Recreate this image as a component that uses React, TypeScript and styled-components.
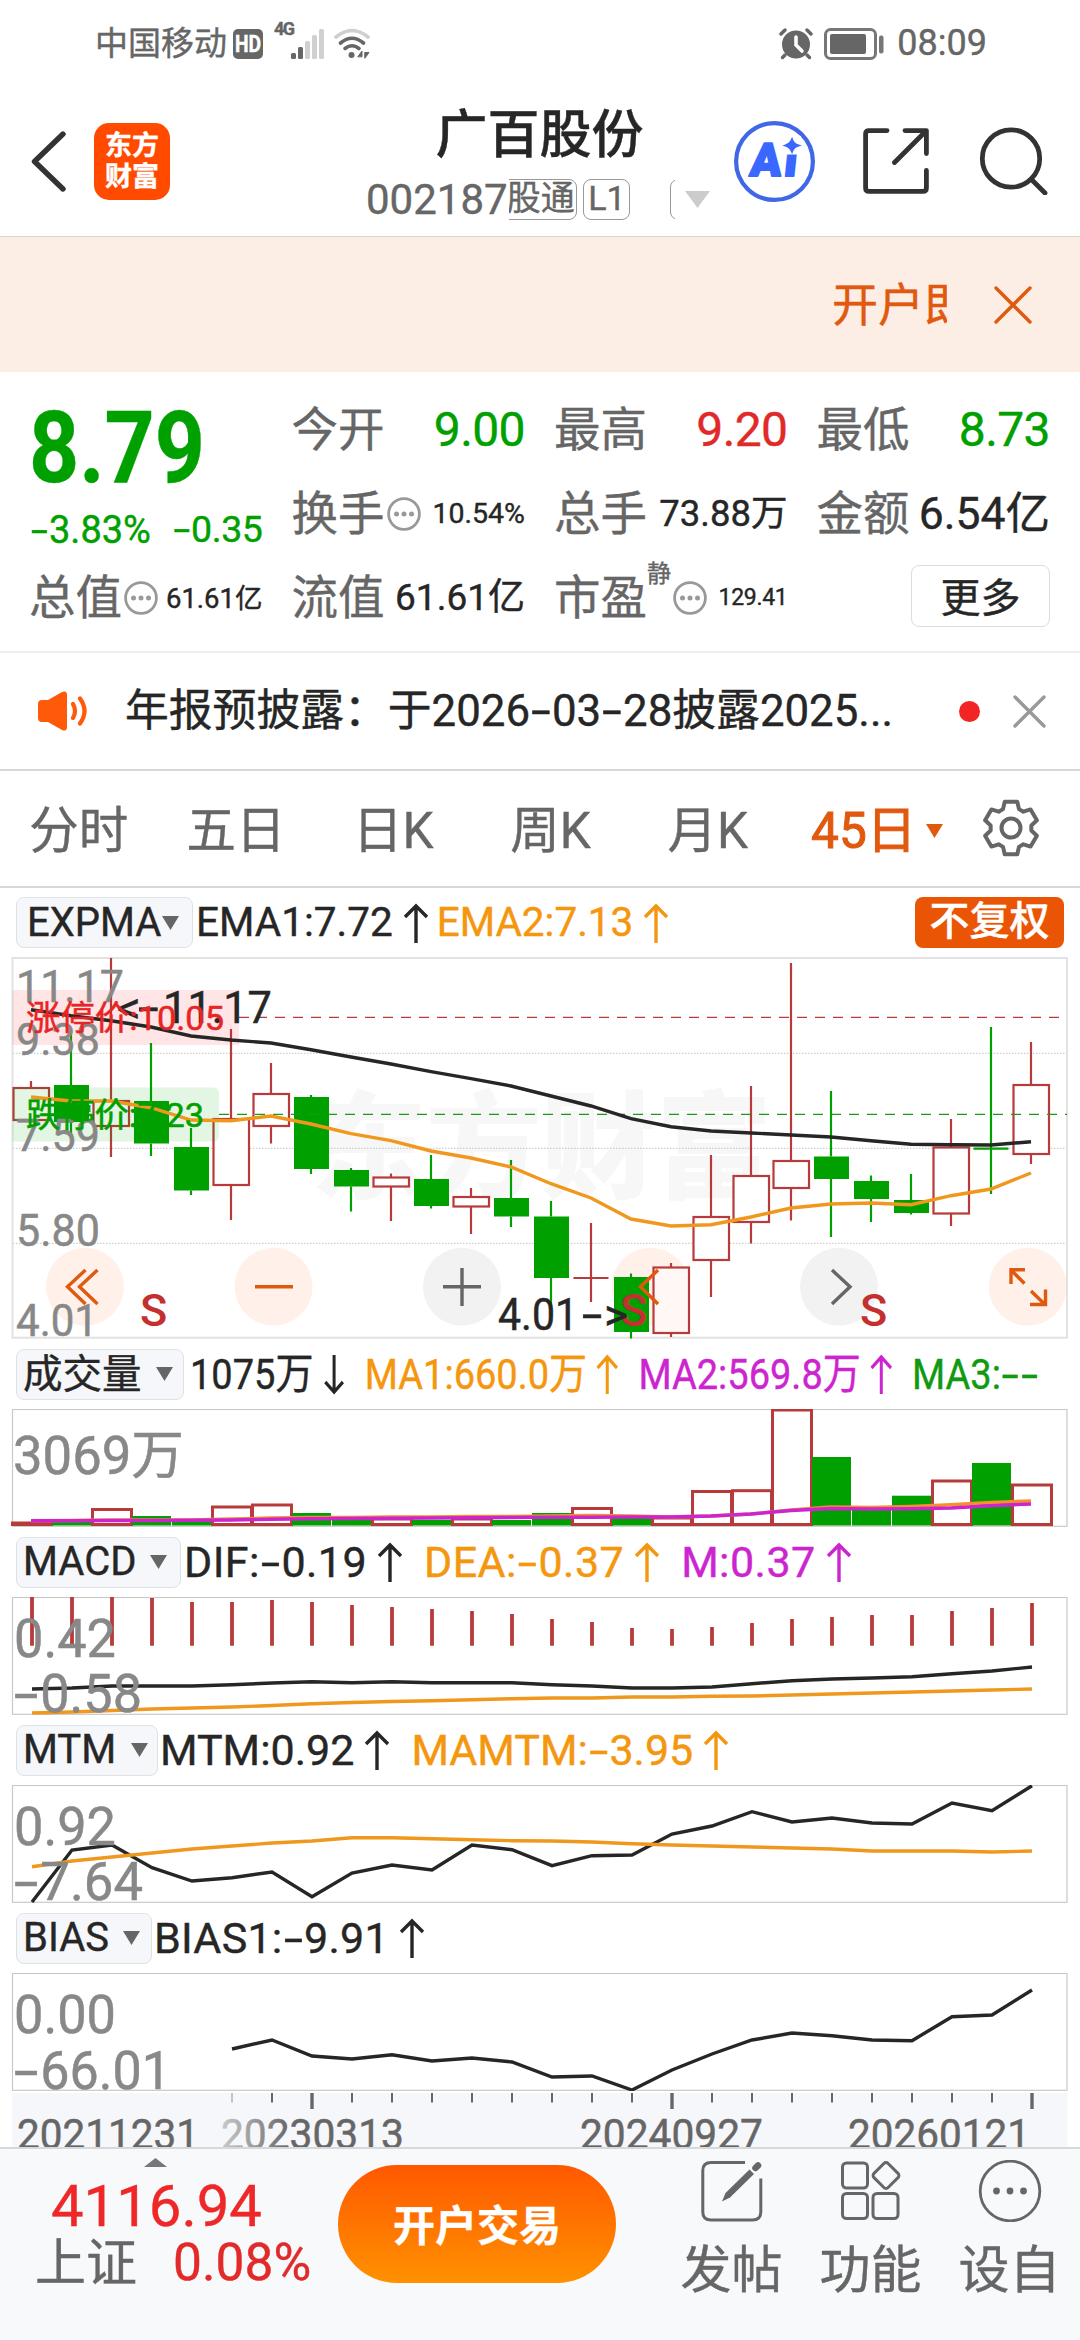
import React from "react";
import styled, { createGlobalStyle } from "styled-components";

const GlobalStyle = createGlobalStyle`
  * { box-sizing: border-box; }
  body { margin: 0; background: #fff; }
  svg { display: block; flex: none; }
`;

const FONT = `Roboto, "Noto Sans CJK SC", sans-serif`;
const GREEN = "#00a000";
const RED = "#b83a3a";
const ORANGE = "#f0981e";
const INK = "#262626";
const ACCENT = "#e0590f";
const PURPLE = "#cc25d0";

const Screen = styled.div`
  width: 1080px;
  height: 2340px;
  display: flex;
  flex-direction: column;
  overflow: hidden;
  background: #fff;
  font-family: ${FONT};
  color: ${INK};
  white-space: nowrap;
  -webkit-text-stroke: 0.4px;
`;

const Txt = styled.span<{ s: number; c?: string; w?: number; ls?: number; sx?: number; ml?: number }>`
  display: inline-block;
  margin-left: ${(p) => p.ml || 0}px;
  font-size: ${(p) => p.s}px;
  line-height: ${(p) => Math.round(p.s * 1.2)}px;
  color: ${(p) => p.c || "inherit"};
  font-weight: ${(p) => p.w || 400};
  letter-spacing: ${(p) => p.ls || 0}px;
  transform: ${(p) => (p.sx ? `scaleX(${p.sx})` : "none")};
  transform-origin: left center;
`;

const Dash = styled.span`
  display: inline-block;
  width: 0.5em;
  text-align: center;
  transform: scaleX(1.6);
`;

function Wide({ children }: { children: string }) {
  return (
    <>
      {children.split(/(-)/).map((part, i) => (part === "-" ? <Dash key={i}>-</Dash> : part))}
    </>
  );
}

/* ---------- status bar ---------- */

const StatusBar = styled.div`
  height: 87px;
  padding: 0 93px 0 95px;
  display: flex;
  align-items: center;
  justify-content: space-between;
  color: #666;
`;
const StatusSide = styled.div`
  display: flex;
  align-items: center;
`;
const HdBadge = styled.span`
  width: 30px;
  height: 30px;
  margin-left: 6px;
  border-radius: 5px;
  background: #666;
  color: #fff;
  font-size: 21px;
  font-weight: 700;
  line-height: 31px;
  text-align: center;
`;
const HdText = styled.span`
  display: block;
  transform: scale(0.92, 1.1);
`;
const NetLabel = styled.span`
  margin: -30px 0 0 11px;
  width: 17px;
  font-size: 18px;
  font-weight: 700;
  line-height: 18px;
  letter-spacing: -1.6px;
`;

/* ---------- header ---------- */

const Header = styled.header`
  height: 150px;
  padding-left: 31px;
  display: flex;
  align-items: center;
  border-bottom: 1px solid #d4d4d4;
`;
const Logo = styled.div`
  width: 76px;
  height: 77px;
  margin: 0 196px 0 28px;
  padding-top: 8px;
  border-radius: 15px;
  background: #ff4a00;
  color: #fff;
  font-size: 27px;
  font-weight: 700;
  line-height: 31px;
  text-align: center;
`;
const TitleBlock = styled.div`
  width: 347px;
  height: 150px;
  padding-top: 18px;
  display: flex;
  flex-direction: column;
  align-items: center;
`;
const CodeRow = styled.div`
  width: 347px;
  height: 42px;
  margin-top: 12px;
  display: flex;
  align-items: center;
`;
const TagStrip = styled.div`
  width: 166px;
  height: 41px;
  margin-left: 1px;
  display: flex;
  align-items: center;
  overflow: hidden;
`;
const Tag = styled.span<{ ml: number; w: number }>`
  flex: none;
  width: ${(p) => p.w}px;
  height: 41px;
  margin-left: ${(p) => p.ml}px;
  padding-right: 3px;
  border: 1.5px solid #999;
  border-radius: 8px;
  color: #666;
  font-size: 34px;
  line-height: 37px;
  text-align: right;
`;
const HeaderIcons = styled.div`
  display: flex;
  align-items: center;
  margin: -1px 0 0 21px;
`;

/* ---------- banner ---------- */

const Banner = styled.div`
  height: 135px;
  padding-right: 48px;
  display: flex;
  align-items: center;
  justify-content: flex-end;
  background: #fdeee5;
`;
const Marquee = styled.div`
  width: 115px;
  margin: 2px 47px 0 0;
  overflow: hidden;
`;

/* ---------- quote ---------- */

const Quote = styled.section`
  height: 281px;
  padding: 16px 30px 0;
  display: grid;
  grid-template-columns: repeat(4, 232.5px);
  grid-template-rows: 84px 84px 84px;
  column-gap: 30px;
  border-bottom: 2px solid #eee;
`;
const PriceBlock = styled.div`
  grid-row: span 2;
  display: flex;
  flex-direction: column;
`;
const ChangeRow = styled.div`
  display: flex;
  justify-content: space-between;
  margin-top: -1px;
`;
const Cell = styled.div`
  display: flex;
  align-items: center;
`;
const CellLabel = styled.span`
  margin-left: -1px;
  font-size: 46.5px;
  line-height: 56px;
  color: #666;
`;
const CellValue = styled.div`
  margin-left: auto;
  display: flex;
`;
const Sup = styled.span`
  align-self: flex-start;
  margin-top: 3px;
  font-size: 24px;
  line-height: 30px;
  color: #666;
`;
const MoreButton = styled.button`
  width: 139px;
  height: 62px;
  margin: -4px 0 0 auto;
  padding: 0 0 3px;
  border: 1.5px solid #ddd;
  border-radius: 8px;
  background: #fff;
  color: ${INK};
  font: 40px ${FONT};
`;

/* ---------- notice ---------- */

const Notice = styled.div`
  height: 118px;
  padding: 0 34px 0 38px;
  display: flex;
  align-items: center;
  border-bottom: 2px solid #d6d9d9;
`;
const Dot = styled.span`
  width: 21px;
  height: 21px;
  margin: 0 33px 0 auto;
  border-radius: 50%;
  background: #f22424;
`;

/* ---------- period tabs ---------- */

const Tabs = styled.nav`
  height: 117px;
  display: flex;
  align-items: center;
  border-bottom: 2px solid #d6d9d9;
`;
const Tab = styled.div<{ active?: boolean }>`
  flex: none;
  width: 157.3px;
  display: flex;
  align-items: center;
  justify-content: center;
  margin-top: 5px;
  padding-left: ${(p) => (p.active ? 24 : 0)}px;
  font-size: 49.5px;
  line-height: 60px;
  color: ${(p) => (p.active ? ACCENT : "#666")};
  -webkit-text-stroke: ${(p) => (p.active ? 1 : 0.4)}px;
`;
const GearSlot = styled.div`
  margin: -2px 0 0 38px;
`;

/* ---------- indicator rows ---------- */

const IndicatorRow = styled.div<{ h: number }>`
  height: ${(p) => p.h}px;
  padding: 9px 16px 9px;
  display: flex;
  align-items: center;
`;
const Chip = styled.div<{ w: number; gap: number; pad: number }>`
  flex: none;
  width: ${(p) => p.w}px;
  height: 51px;
  padding-left: ${(p) => p.pad}px;
  display: flex;
  align-items: center;
  gap: ${(p) => p.gap}px;
  border: 1.5px solid #dfe2e5;
  border-radius: 8px;
  background: #f6f7fa;
`;
const Readings = styled.div<{ sx: number; ml: number; gap: number; s: number; ls: number }>`
  display: flex;
  align-items: center;
  gap: ${(p) => p.gap}px;
  margin-left: ${(p) => p.ml}px;
  font-size: ${(p) => p.s}px;
  letter-spacing: ${(p) => p.ls}px;
  line-height: 51px;
  transform: scaleX(${(p) => p.sx});
  transform-origin: left center;
`;
const Reading = styled.span<{ c: string }>`
  display: inline-flex;
  align-items: center;
  color: ${(p) => p.c};
`;
const AdjustBadge = styled.div`
  width: 149px;
  height: 51px;
  margin-left: auto;
  border-radius: 8px;
  background: #e95504;
  color: #fff;
  font-size: 40px;
  font-weight: 500;
  line-height: 50px;
  text-align: center;
`;
const Plot = styled.div<{ h: number }>`
  height: ${(p) => p.h}px;
  flex: none;
`;

/* ---------- bottom bar ---------- */

const BottomBar = styled.footer`
  flex: 1;
  display: flex;
  align-items: flex-start;
  border-top: 2px solid #d6d9dc;
  background: #f8f9fb;
`;
const IndexBlock = styled.div`
  width: 338px;
  display: flex;
  flex-direction: column;
  padding-top: 9px;
`;
const IndexValue = styled.div`
  margin: 4px 0 0 51px;
`;
const IndexRow = styled.div`
  display: flex;
  align-items: center;
  gap: 36px;
  padding-left: 35px;
  margin-top: -9px;
`;
const TradeButton = styled.button`
  width: 278px;
  height: 118px;
  margin-top: 16px;
  padding: 0 0 3px;
  border: 0;
  border-radius: 59px;
  background: linear-gradient(#ff5800, #ff9100);
  color: #fff;
  font: 700 42px ${FONT};
`;
const Actions = styled.div`
  display: grid;
  grid-template-columns: repeat(3, 139px);
  margin: 11px 0 0 46px;
`;
const Action = styled.div`
  display: flex;
  flex-direction: column;
  align-items: center;
  gap: 18px;
`;

/* ---------- small drawings ---------- */

const Tri = ({ w = 17, h = 14, c = "#666", up = false, ml = 0 }: { w?: number; h?: number; c?: string; up?: boolean; ml?: number }) => (
  <svg width={w + ml} height={h} viewBox={`${-ml} 0 ${w + ml} ${h}`}>
    <path d={up ? `M0 ${h}H${w}L${w / 2} 0Z` : `M0 0H${w}L${w / 2} ${h}Z`} fill={c} />
  </svg>
);
const Arrow = ({ down = false }: { down?: boolean }) => (
  <svg width="43" height="46" viewBox="0 0 43 46" fill="none" stroke="currentColor" strokeWidth="3.400">
    <path d={down ? "M23 4V41M13 31L23 41L33 31" : "M23 43V6M12 17L23 6L34 17"} />
  </svg>
);
const Cross = ({ s, c, w }: { s: number; c: string; w: number }) => (
  <svg width={s} height={s} viewBox={`0 0 ${s} ${s}`} stroke={c} strokeWidth={w} strokeLinecap="round">
    <path d={`M2 2L${s - 2} ${s - 2}M${s - 2} 2L2 ${s - 2}`} />
  </svg>
);
const Info = ({ ml = 2 }: { ml?: number }) => (
  <svg width={34 + ml} height="34" viewBox={`${-ml} 0 ${34 + ml} 34`}>
    <circle cx="17" cy="17" r="15.400" fill="none" stroke="#999" strokeWidth="2.800" />
    {[9.5, 17, 24.5].map((x) => (
      <circle key={x} cx={x} cy="17" r="2.500" fill="#999" />
    ))}
  </svg>
);

const SignalIcon = () => (
  <svg width="34" height="32" viewBox="0 0 34 32">
    <rect x="0" y="25" width="5" height="6" rx="1.500" fill="#666" />
    <rect x="7" y="19" width="5" height="12" rx="1.500" fill="#666" />
    <rect x="14" y="13" width="5" height="18" rx="1.500" fill="#d0d0d0" />
    <rect x="21" y="7" width="5" height="24" rx="1.500" fill="#d0d0d0" />
    <rect x="28" y="1" width="5" height="30" rx="1.500" fill="#d0d0d0" />
  </svg>
);
const WifiIcon = () => (
  <svg width="46" height="32" viewBox="-9 0 46 32" fill="none" strokeWidth="3.600" strokeLinecap="round">
    <path d="M2 9Q18 -4 34 9" stroke="#cfcfcf" />
    <path d="M6.500 15Q18 5.500 29.500 15" stroke="#666" />
    <path d="M11 20.500Q18 15 25 20.500" stroke="#666" />
    <circle cx="17.500" cy="27" r="3" fill="#666" />
    <path d="M24 28.500L28 23V28.500ZM31 24.500H35L31 30Z" fill="#666" stroke="#666" strokeWidth="1" />
  </svg>
);
const AlarmIcon = () => (
  <svg width="34" height="32" viewBox="0 0 34 32">
    <circle cx="17" cy="16.500" r="14" fill="#666" />
    <path d="M2 6L6 2M32 6L28 2" stroke="#666" strokeWidth="3.400" strokeLinecap="round" />
    <path d="M6 27L3.500 29.500M28 27L30.500 29.500" stroke="#666" strokeWidth="3.400" strokeLinecap="round" />
    <path d="M17 9V17L23 23" fill="none" stroke="#fff" strokeWidth="3.600" strokeLinecap="round" />
  </svg>
);
const BatteryIcon = () => (
  <svg width="72" height="32" viewBox="-11 0 72 32">
    <rect x="1.500" y="1.500" width="50" height="29" rx="5" fill="none" stroke="#777" strokeWidth="3" />
    <rect x="6" y="6" width="36" height="20" rx="2" fill="#666" />
    <rect x="55" y="7.500" width="4.500" height="18" rx="2" fill="#777" />
  </svg>
);
const BackIcon = () => (
  <svg width="35" height="61" viewBox="0 0 35 61" fill="none" stroke="#333" strokeWidth="5.400" strokeLinecap="round" strokeLinejoin="round">
    <path d="M32 3L3.500 30.500L32 58" />
  </svg>
);
const AiIcon = () => (
  <svg width="81" height="81" viewBox="0 0 81 81">
    <circle cx="40.500" cy="40.500" r="38.400" fill="none" stroke="#4068e6" strokeWidth="4.200" />
    <g transform="translate(15 55) skewX(-6)">
      <text x="0" y="0" fontFamily="Roboto" fontSize="46" fontWeight="900" fill="#3a68ff" stroke="#3a68ff" strokeWidth="2" strokeLinejoin="round" letterSpacing="3">
        Ai
      </text>
    </g>
    <rect x="47" y="15" width="20" height="18.500" fill="#fff" />
    <path d="M58 18.500Q59.500 23 64.500 24.500Q59.500 26 58 30.500Q56 26 51.500 24.500Q56 23 58 18.500Z" fill="#3a68ff" stroke="#3a68ff" strokeWidth="2" />
  </svg>
);
const ShareIcon = () => (
  <svg width="114" height="66" viewBox="-48 0 114 66" fill="none" stroke="#333" strokeWidth="4.800" strokeLinecap="round" strokeLinejoin="round">
    <path d="M24 2.600H6Q2.600 2.600 2.600 6V60Q2.600 63.400 6 63.400H60Q63.400 63.400 63.400 60V42.500" />
    <path d="M42 2.600H63.400V25.500M63 3L31.500 34.500" />
  </svg>
);
const SearchIcon = () => (
  <svg width="119" height="68" viewBox="-51 0 119 68" fill="none" stroke="#333" strokeWidth="4.800" strokeLinecap="round">
    <circle cx="31" cy="31.500" r="28.700" />
    <path d="M52 53L65 66" />
  </svg>
);
const SpeakerIcon = () => (
  <svg width="50" height="40" viewBox="0 0 50 40">
    <path d="M0 13Q0 9 4 9H10L24 1Q29 -1 29 4V36Q29 41 24 39L10 31H4Q0 31 0 27Z" fill="#ff5a0a" />
    <path d="M35 13Q39 20 35 27M42 7.500Q51 20 42 32.500" fill="none" stroke="#ff5a0a" strokeWidth="4.200" strokeLinecap="round" />
  </svg>
);
const GearIcon = () => {
  const pts: string[] = [];
  const R = 27;
  const r = 20.5;
  for (let i = 0; i < 6; i++) {
    const a = (i * 60 - 90) * (Math.PI / 180);
    const tooth: [number, number][] = [[r, -0.4], [R, -0.235], [R, 0.235], [r, 0.4]];
    tooth.forEach(([rad, d]) => pts.push(`${29 + rad * Math.cos(a + d)},${29 + rad * Math.sin(a + d)}`));
  }
  return (
    <svg width="58" height="58" viewBox="0 0 58 58" fill="none" stroke="#666" strokeWidth="4" strokeLinejoin="round">
      <polygon points={pts.join(" ")} />
      <circle cx="29" cy="29" r="9.500" />
    </svg>
  );
};
const PostIcon = () => (
  <svg width="62" height="62" viewBox="0 0 62 62" fill="none" stroke="#666" strokeWidth="3">
    <path d="M44 2.500H10Q1.800 2.500 1.800 10.500V52Q1.800 60 10 60H51.500Q59.800 60 59.800 52V18.500" />
    <path d="M21 41.500L24.500 33L48.500 9.500L53 14L29 37.500Z" fill="#666" stroke="none" />
    <path d="M54.500 8L57 5.500" strokeWidth="6.500" strokeLinecap="round" />
  </svg>
);
const GridIcon = () => (
  <svg width="60" height="62" viewBox="0 0 60 62" fill="none" stroke="#666" strokeWidth="3">
    <rect x="1.500" y="3" width="25" height="25" rx="4" />
    <rect x="1.500" y="33.500" width="25" height="25" rx="4" />
    <rect x="32" y="33.500" width="25" height="25" rx="4" />
    <rect x="35" y="5.500" width="20" height="20" rx="3" transform="rotate(45 45 15.500)" />
  </svg>
);
const DotsIcon = () => (
  <svg width="64" height="62" viewBox="0 0 64 62">
    <circle cx="32" cy="31" r="29.800" fill="none" stroke="#666" strokeWidth="2.800" />
    {[18.5, 32, 45.5].map((x) => (
      <circle key={x} cx={x} cy="31" r="3.400" fill="#666" />
    ))}
  </svg>
);

/* ---------- chart data ---------- */

type Candle = [up: boolean, high: number, low: number, top: number, bottom: number];
const CANDLES: Candle[] = [
  [true, 1081, 1120, 1088, 1120],
  [false, 1029, 1137, 1085, 1122],
  [true, 958, 1157, 1101, 1126],
  [false, 1043, 1156, 1101, 1143.5],
  [false, 1128, 1195, 1147, 1190.5],
  [true, 1029, 1220, 1119, 1185],
  [true, 1063, 1143.5, 1094, 1126],
  [false, 1095, 1174, 1097, 1169],
  [false, 1168, 1211.5, 1170, 1186.5],
  [true, 1173.5, 1221, 1177.5, 1186.5],
  [false, 1155, 1208.5, 1179, 1206],
  [true, 1188, 1234, 1197, 1206.5],
  [false, 1160, 1227, 1198, 1216.5],
  [false, 1201, 1316, 1216.5, 1278],
  [true, 1223, 1302, 1278, 1278],
  [false, 1273.5, 1338.5, 1277, 1332],
  [true, 1263, 1337, 1267.5, 1333],
  [true, 1155, 1297, 1217, 1260],
  [true, 1086, 1243.5, 1176, 1222],
  [true, 963, 1220.5, 1161, 1188],
  [false, 1091, 1237, 1156.5, 1179],
  [false, 1175.5, 1222, 1181, 1199],
  [false, 1174, 1214.5, 1200, 1213],
  [true, 1119, 1226, 1147.5, 1213.5],
  [false, 1027, 1194, 1148.7, 1148.7],
  [true, 1042, 1164, 1085, 1154],
];
const EMA1 = [1009.7, 1015.7, 1020.7, 1027, 1036, 1040, 1043, 1049.7, 1057, 1064, 1071.7, 1078.7, 1086, 1096, 1106, 1118.7, 1126.7, 1131, 1133, 1135, 1137, 1140.7, 1144.3, 1144.7, 1145, 1141.7];
const EMA2 = [1097, 1101, 1101, 1107.7, 1120, 1120.7, 1116, 1124, 1133.7, 1140.7, 1151, 1158, 1167, 1183.7, 1198, 1219, 1226, 1224.7, 1217, 1208, 1204, 1203, 1204.7, 1195.7, 1189, 1173];

const VOLUMES: [boolean, number][] = [
  [true, 1523], [false, 1521.5], [true, 1509.5], [false, 1516], [false, 1520.5], [true, 1507], [true, 1505],
  [false, 1513], [false, 1520], [true, 1519], [false, 1520], [true, 1519], [false, 1520], [false, 1513],
  [true, 1508.5], [false, 1517], [true, 1518], [true, 1491.5], [true, 1490.7], [true, 1410], [false, 1457],
  [false, 1509.5], [false, 1495.7], [true, 1481], [false, 1463], [true, 1485],
];
const VMA2 = [1520.7, 1520.7, 1520.5, 1520.5, 1520.3, 1520, 1519.3, 1518.7, 1518.5, 1518.3, 1518, 1517.7, 1517.5, 1517.3, 1517.3, 1517, 1517, 1516, 1514, 1510.5, 1508.5, 1509, 1508.7, 1508, 1505.7, 1504];
const VMA1 = [1520.7, 1520.5, 1520, 1520, 1520, 1519, 1518, 1517.5, 1517.5, 1517, 1517, 1516.5, 1516.5, 1516, 1515.5, 1516, 1517, 1516, 1514, 1510, 1507, 1507.5, 1506.5, 1504.7, 1502.5, 1501];

const MACD_BARS = [1597, 1597, 1597, 1598, 1602, 1602, 1600, 1602, 1605, 1607, 1609, 1611, 1614, 1619, 1622, 1628, 1629, 1627, 1623, 1619, 1617, 1615, 1615, 1611, 1608, 1603];
const DIF = [1689, 1688, 1686, 1686, 1686, 1684.7, 1683, 1681.7, 1682.7, 1681.7, 1682.7, 1682.7, 1682.7, 1684.7, 1686, 1688, 1688, 1687, 1683.7, 1680.7, 1679, 1678, 1676.7, 1673.7, 1671, 1667];
const DEA = [1713, 1712, 1710.5, 1709, 1708, 1707, 1705.5, 1703.7, 1702.5, 1701.5, 1700.7, 1699.7, 1698.7, 1698, 1698, 1697, 1697, 1696.3, 1696, 1695, 1694, 1693, 1692, 1691, 1690, 1689];
const MTM = [1902, 1850, 1845, 1867.7, 1881, 1877.7, 1872, 1896.7, 1873, 1865, 1870, 1845, 1849.7, 1865.7, 1855.7, 1855, 1834, 1826, 1811.7, 1822, 1818, 1823, 1824, 1803, 1810.7, 1785.7];
const MAMTM = [1866.7, 1861, 1857, 1853, 1849, 1846, 1843, 1841, 1837.7, 1837.7, 1838.7, 1839.7, 1840.7, 1841, 1842, 1843.7, 1845, 1846, 1847, 1848, 1849, 1851, 1851, 1851, 1852, 1851];
const BIAS = [2049, 2040, 2056, 2059, 2054.7, 2061, 2058, 2062, 2077, 2076, 2090, 2070, 2054, 2040, 2033, 2035.7, 2040, 2040.7, 2016.7, 2015, 1990];

const line = (ys: number[], x0: number) => ys.map((y, i) => `${x0 + i * 40},${y}`).join(" ");

function Line({ ys, x0 = 32, c, w = 3.4 }: { ys: number[]; x0?: number; c: string; w?: number }) {
  return <polyline points={line(ys, x0)} fill="none" stroke={c} strokeWidth={w} />;
}

function Label({ x, y, s, len, c, children }: { x: number; y: number; s: number; len: number; c: string; children: string }) {
  const neg = children.startsWith("-");
  const shift = neg ? s * 0.44 : 0;
  const common = { fontFamily: FONT, fontSize: s, fill: c, stroke: c, strokeWidth: 0.5 };
  return (
    <>
      {neg && (
        <text x={x - 3} y={y} {...common} textLength={s * 0.46} lengthAdjust="spacingAndGlyphs">-</text>
      )}
      {children.length > 1 || !neg ? (
        <text x={x + shift} y={y} {...common} textLength={len - shift} lengthAdjust="spacingAndGlyphs">
          {neg ? children.slice(1) : children}
        </text>
      ) : null}
    </>
  );
}

function Frame({ top, bottom, c = "#c9c9c9", w = 1.2 }: { top: number; bottom: number; c?: string; w?: number }) {
  return <rect x="12.500" y={top} width="1054.500" height={bottom - top} fill="none" stroke={c} strokeWidth={w} />;
}

function SubPlot({ top, children }: { top: number; children: React.ReactNode }) {
  return (
    <Plot h={118}>
      <svg width="1080" height="118" viewBox={`0 ${top} 1080 118`}>
        <Frame top={top + 0.5} bottom={top + 117.3} />
        {children}
      </svg>
    </Plot>
  );
}

function PriceChart() {
  return (
    <Plot h={382}>
      <svg width="1080" height="382" viewBox="0 957 1080 382">
        <text x="311" y="1189" fontFamily={FONT} fontSize="116" fontWeight="900" fill="#f7f7f7" textLength="461">东方财富</text>
        {[1053.3, 1148.3, 1243.3].map((y) => (
          <line key={y} x1="13" x2="1067" y1={y} y2={y} stroke="#c4c4c4" strokeWidth="1" strokeDasharray="1.500 1.500" />
        ))}
        {[[85, 1], [273.6, 1], [462, 0], [650.5, 1], [839, 0], [1027.8, 1]].map(([x, warm]) => (
          <circle key={x} cx={x} cy="1286.700" r="39" fill={warm ? "#fff1ea" : "#f2f2f2"} />
        ))}
        <Frame top={958} bottom={1337.7} c="#e2e2e2" w={2} />
        {CANDLES.map(([up, high, low, top, bottom], i) => {
          const x = 31 + i * 40;
          const col = up ? RED : GREEN;
          if (top === bottom)
            return (
              <g key={i} stroke={col} strokeWidth="2.200">
                <line x1={x} x2={x} y1={high} y2={low} />
                <line x1={x - 17.5} x2={x + 17.5} y1={top} y2={top} />
              </g>
            );
          return (
            <g key={i} stroke={col} strokeWidth="2.200">
              <line x1={x} x2={x} y1={high} y2={top} />
              <line x1={x} x2={x} y1={bottom} y2={low} />
              {up ? (
                <rect x={x - 17.5} y={top} width="35.500" height={bottom - top} fill={i === 16 ? "#fff8f4" : "#fff"} />
              ) : (
                <rect x={x - 17} y={top} width="35" height={bottom - top} fill={GREEN} stroke="none" />
              )}
            </g>
          );
        })}
        <rect x="12.500" y="990" width="226.500" height="55" fill="#ff0000" opacity="0.1" />
        <path d="M12.500 1087.500H213Q219 1087.500 219 1093.500V1135.500Q219 1141.500 213 1141.500H12.500Z" fill={GREEN} opacity="0.11" />
        <line x1="239" x2="1067" y1="1017.300" y2="1017.300" stroke={RED} strokeWidth="1.300" strokeDasharray="10 8" />
        <line x1="219" x2="1067" y1="1114.300" y2="1114.300" stroke="#1c981c" strokeWidth="1.300" strokeDasharray="10 8" />
        <Label x={117} y={1022.5} s={45} len={24} c={INK}>{"<"}</Label>
        <Label x={141} y={1022.5} s={45} len={20} c={INK}>-</Label>
        <Label x={163} y={1022.5} s={45} len={109} c={INK}>11.17</Label>
        <Label x={16} y={1002} s={45} len={108} c="#888">11.17</Label>
        <Label x={16} y={1054.5} s={45} len={84} c="#888">9.38</Label>
        <Label x={16} y={1150.5} s={45} len={84} c="#888">7.59</Label>
        <Label x={16} y={1245.5} s={45} len={84} c="#888">5.80</Label>
        <Label x={16} y={1336} s={45} len={82} c="#888">4.01</Label>
        <Line ys={EMA1} x0={31} c={INK} />
        <Line ys={EMA2} x0={31} c={ORANGE} />
        <Label x={26} y={1029.5} s={34} len={198} c="#e82424">涨停价:10.05</Label>
        <Label x={26} y={1126.5} s={34} len={178} c={GREEN}>跌停价:7.23</Label>
        <g fill="none" stroke={ACCENT} strokeWidth="3.400">
          <path d="M85.500 1270L67.500 1286.700L85.500 1304M97.500 1270L79.500 1286.700L97.500 1304" />
          <path d="M255 1286.700H293" />
          <path d="M658 1270L640.500 1286.700L658 1304" />
          <path d="M1025 1269.700H1011V1284M1011 1270L1024.500 1283.500M1031 1291L1045 1304.500M1045.500 1289.500V1304.500H1030" />
        </g>
        <g fill="none" stroke="#666" strokeWidth="3.400">
          <path d="M443 1286.700H481M462 1268V1306" />
          <path d="M832 1270L850 1286.700L832 1304" />
        </g>
        {[153.5, 633.5, 873.5].map((x) => (
          <text key={x} x={x} y="1326" fontFamily={FONT} fontSize="45" fontWeight="500" fill="#c4302f" textAnchor="middle">S</text>
        ))}
        <Label x={498} y={1330} s={44} len={80} c={INK}>4.01</Label>
        <Label x={585} y={1330} s={44} len={20} c={INK}>-</Label>
        <Label x={604} y={1330} s={44} len={24} c={INK}>{">"}</Label>
      </svg>
    </Plot>
  );
}

function VolumeChart() {
  return (
    <SubPlot top={1409}>
      <Label x={13} y={1473.5} s={53} len={171} c="#888">3069万</Label>
      {VOLUMES.map(([up, top], i) => {
        const x = 31 + i * 40;
        return up ? (
          <rect key={i} x={x - 18.5} y={top} width="39" height={1524.5 - top} fill="#fff" stroke={RED} strokeWidth="3" />
        ) : (
          <rect key={i} x={x - 19} y={top} width="39" height={1525.5 - top} fill={GREEN} />
        );
      })}
      <Line ys={VMA1} x0={31} c="#f5902c" />
      <Line ys={VMA2} x0={31} c={PURPLE} />
    </SubPlot>
  );
}

function TimeAxis() {
  return (
    <svg width="1080" height="56" viewBox="0 2091 1080 56">
      <defs>
        <linearGradient id="fade" x1="222" x2="290" y1="0" y2="0" gradientUnits="userSpaceOnUse">
          <stop offset="0" stopColor="#c8c8c8" />
          <stop offset="1" stopColor="#666" />
        </linearGradient>
      </defs>
      <rect x="12" y="2093" width="1055.500" height="54" fill="#f6f7fa" />
      {Array.from({ length: 21 }, (_, k) => k + 5).map((i) => {
        const major = (i - 7) % 9 === 0;
        return (
          <line key={i} x1={32 + i * 40} x2={32 + i * 40} y1="2093" y2={major ? 2109 : 2102.5} stroke={i === 5 ? "#c4c4c4" : "#666"} strokeWidth={major ? 3.4 : 2} />
        );
      })}
      <Label x={17} y={2149} s={43} len={182} c="#666">20211231</Label>
      <Label x={221} y={2149} s={43} len={183} c="url(#fade)">20230313</Label>
      <Label x={580} y={2149} s={43} len={183} c="#666">20240927</Label>
      <Label x={848} y={2149} s={43} len={182} c="#666">20260121</Label>
    </svg>
  );
}

function Indicator({ name, chip, gap, pad = 6, sx = 1, ml, items, s = 43, ls = 0, h = 70, itemGap = 14, nameSize = 40, children }: {
  name: string; chip: number; gap: number; pad?: number; sx?: number; ml: number;
  items: [string, string, ("up" | "down")?][]; s?: number; ls?: number; h?: number; itemGap?: number; nameSize?: number; children?: React.ReactNode;
}) {
  return (
    <IndicatorRow h={h}>
      <Chip w={chip} gap={gap} pad={pad}>
        <Txt s={nameSize}>{name}</Txt>
        <Tri />
      </Chip>
      <Readings sx={sx} ml={ml} gap={itemGap} s={s} ls={ls}>
        {items.map(([text, color, dir]) => (
          <Reading key={text} c={color}>
            <span><Wide>{text}</Wide></span>
            {dir && <Arrow down={dir === "down"} />}
          </Reading>
        ))}
      </Readings>
      {children}
    </IndicatorRow>
  );
}

const AMBER = "#f5960f";

export default function App() {
  return (
    <Screen>
      <GlobalStyle />
      <StatusBar>
        <StatusSide>
          <Txt s={33}>中国移动</Txt>
          <HdBadge><HdText>HD</HdText></HdBadge>
          <NetLabel>4G</NetLabel>
          <SignalIcon />
          <WifiIcon />
        </StatusSide>
        <StatusSide>
          <AlarmIcon />
          <BatteryIcon />
          <Txt s={36} ml={12}>08:09</Txt>
        </StatusSide>
      </StatusBar>

      <Header>
        <BackIcon />
        <Logo>东方<br />财富</Logo>
        <TitleBlock>
          <Txt s={52} w={500}>广百股份</Txt>
          <CodeRow>
            <Txt s={42} c="#666">002187</Txt>
            <TagStrip>
              <Tag ml={-37} w={105}>沪股通</Tag>
              <Tag ml={6} w={47}>L1</Tag>
              <Tag ml={40} w={60} />
            </TagStrip>
            <Tri w={25} h={17} c="#ccc" ml={10} />
          </CodeRow>
        </TitleBlock>
        <HeaderIcons>
          <AiIcon />
          <ShareIcon />
          <SearchIcon />
        </HeaderIcons>
      </Header>

      <Banner>
        <Marquee><Txt s={46} c={ACCENT}>开户即</Txt></Marquee>
        <Cross s={38} c={ACCENT} w={3.4} />
      </Banner>

      <Quote>
        <PriceBlock>
          <Txt s={100} w={700} c={GREEN} sx={0.875} ml={-1}>8.79</Txt>
          <ChangeRow>
            <Txt s={38} c={GREEN}><Wide>-3.83%</Wide></Txt>
            <Txt s={37.5} c={GREEN} ls={-0.4}><Wide>-0.35</Wide></Txt>
          </ChangeRow>
        </PriceBlock>
        <Cell><CellLabel>今开</CellLabel><CellValue><Txt s={48} c={GREEN} ls={-0.6}>9.00</Txt></CellValue></Cell>
        <Cell><CellLabel>最高</CellLabel><CellValue><Txt s={48} c="#e02a2a" ls={-0.6}>9.20</Txt></CellValue></Cell>
        <Cell><CellLabel>最低</CellLabel><CellValue><Txt s={48} c={GREEN} ls={-0.6}>8.73</Txt></CellValue></Cell>
        <Cell><CellLabel>换手</CellLabel><Info /><CellValue><Txt s={28.5}>10.54%</Txt></CellValue></Cell>
        <Cell><CellLabel>总手</CellLabel><CellValue><Txt s={36.5}>73.88万</Txt></CellValue></Cell>
        <Cell><CellLabel>金额</CellLabel><CellValue><Txt s={44.5}>6.54亿</Txt></CellValue></Cell>
        <Cell><CellLabel>总值</CellLabel><Info /><CellValue><Txt s={27.5}>61.61亿</Txt></CellValue></Cell>
        <Cell><CellLabel>流值</CellLabel><CellValue><Txt s={37}>61.61亿</Txt></CellValue></Cell>
        <Cell><CellLabel>市盈</CellLabel><Sup>静</Sup><Info ml={2} /><CellValue><Txt s={23} ls={-0.3}>129.41</Txt></CellValue></Cell>
        <Cell><MoreButton>更多</MoreButton></Cell>
      </Quote>

      <Notice>
        <SpeakerIcon />
        <Txt s={43.8} ml={37}><Wide>年报预披露：于2026-03-28披露2025...</Wide></Txt>
        <Dot />
        <Cross s={33} c="#999" w={3.4} />
      </Notice>

      <Tabs>
        {["分时", "五日", "日K", "周K", "月K"].map((t) => <Tab key={t}>{t}</Tab>)}
        <Tab active>45日<Tri c={ACCENT} ml={10} w={17} h={14} /></Tab>
        <GearSlot><GearIcon /></GearSlot>
      </Tabs>

      <Indicator name="EXPMA" chip={177} gap={1} pad={10} ml={3} s={40.5} h={69} itemGap={1}
        items={[["EMA1:7.72", INK, "up"], ["EMA2:7.13", AMBER, "up"]]}>
        <AdjustBadge>不复权</AdjustBadge>
      </Indicator>
      <PriceChart />

      <Indicator name="成交量" chip={168} gap={14} nameSize={39.5} ml={6} sx={0.884} itemGap={15}
        items={[["1075万", INK, "down"], ["MA1:660.0万", AMBER, "up"], ["MA2:569.8万", PURPLE, "up"], ["MA3:--", "#119a11"]]} />
      <VolumeChart />

      <Indicator name="MACD" chip={165} gap={14} ml={3} ls={0.45}
        items={[["DIF:-0.19", INK, "up"], ["DEA:-0.37", AMBER, "up"], ["M:0.37", PURPLE, "up"]]} />
      <SubPlot top={1597}>
        {MACD_BARS.map((y, i) => (
          <line key={i} x1={32 + i * 40} x2={32 + i * 40} y1={y} y2={1645.7} stroke={RED} strokeWidth="3.800" />
        ))}
        <Line ys={DIF} c={INK} />
        <Line ys={DEA} c={ORANGE} />
        <Label x={14} y={1656.7} s={53} len={102} c="#888">0.42</Label>
        <Label x={17} y={1711.5} s={53} len={125} c="#888">-0.58</Label>
      </SubPlot>

      <Indicator name="MTM" chip={142} gap={15} ml={2}
        items={[["MTM:0.92", INK, "up"], ["MAMTM:-3.95", AMBER, "up"]]} />
      <SubPlot top={1785}>
        <Line ys={MTM} c={INK} />
        <Line ys={MAMTM} c={ORANGE} />
        <Label x={14} y={1845} s={53} len={102} c="#888">0.92</Label>
        <Label x={17} y={1900} s={53} len={126} c="#888">-7.64</Label>
      </SubPlot>

      <Indicator name="BIAS" chip={136} gap={14} ml={2} ls={0.25} items={[["BIAS1:-9.91", INK, "up"]]} />
      <SubPlot top={1973}>
        <Line ys={BIAS} x0={232} c={INK} />
        <Label x={14} y={2033} s={53} len={102} c="#888">0.00</Label>
        <Label x={17} y={2088.5} s={53} len={154} c="#888">-66.01</Label>
      </SubPlot>
      <TimeAxis />

      <BottomBar>
        <IndexBlock>
          <Tri up w={23} h={9} c="#777" ml={144} />
          <IndexValue><Txt s={58} c="#ee2828">4116.94</Txt></IndexValue>
          <IndexRow>
            <Txt s={51} c="#666">上证</Txt>
            <Txt s={51.5} c="#e22a2a">0.08%</Txt>
          </IndexRow>
        </IndexBlock>
        <TradeButton>开户交易</TradeButton>
        <Actions>
          <Action><PostIcon /><Txt s={51} c="#666">发帖</Txt></Action>
          <Action><GridIcon /><Txt s={51} c="#666">功能</Txt></Action>
          <Action><DotsIcon /><Txt s={51} c="#666">设自</Txt></Action>
        </Actions>
      </BottomBar>
    </Screen>
  );
}
